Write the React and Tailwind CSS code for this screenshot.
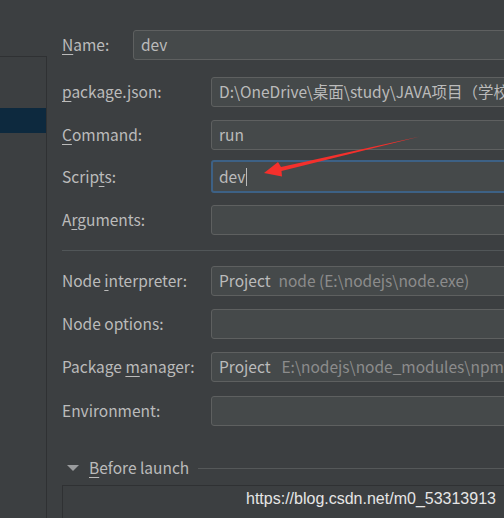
import React from "react";

const font = { fontFamily: '"Noto Sans CJK SC", "Noto Sans", sans-serif' };

function Field({ children, focused, className = "" }) {
  return (
    <div
      className={`h-[30px] w-[420px] shrink-0 rounded-[3px] bg-[#45494a] flex items-center text-[15.5px] text-[#bbbbbb] ${
        focused ? "border-2 border-[#3d6185] pl-[6px]" : "border border-[#5e6060] pl-[7px]"
      } ${className}`}
    >
      {children}
    </div>
  );
}

function Row({ label, children, mt, labelW = "w-[149px]" }) {
  return (
    <div className={`flex items-center ${mt}`}>
      <div className={`${labelW} shrink-0 text-[15.5px] text-[#bbbbbb]`}>{label}</div>
      {children}
    </div>
  );
}

const U = ({ children }) => <span className="underline underline-offset-[3px] decoration-1">{children}</span>;

export default function App() {
  return (
    <div className="relative w-[504px] h-[518px] overflow-hidden bg-[#3c3f41] flex" style={font}>
      <div className="w-[47px] shrink-0 mt-[56px] border-t border-r border-[#2f3133]">
        <div className="mt-[51px] h-[25px] bg-[#0d293e]" />
      </div>

      <div className="flex-1 pl-[15px] pt-[30px] min-w-0">
        <Row label={<><U>N</U>ame:</>} labelW="w-[71px]">
          <Field>dev</Field>
        </Row>
        <Row label={<><U>p</U>ackage.json:</>} mt="mt-[17px]">
          <Field>D:\OneDrive\桌面\study\JAVA项目（学校</Field>
        </Row>
        <Row label={<><U>C</U>ommand:</>} mt="mt-[13px]">
          <Field>run</Field>
        </Row>
        <Row label={<>Scrip<U>t</U>s:</>} mt="mt-[10px]">
          <Field focused className="h-[33px]">
            dev<span className="ml-[1px] inline-block w-px h-[18px] bg-[#bbbbbb]" />
          </Field>
        </Row>
        <Row label={<>A<U>r</U>guments:</>} mt="mt-[12px]">
          <Field />
        </Row>

        <div className="mt-[15px] h-px bg-[#515658]" />

        <Row label={<>Node <U>i</U>nterpreter:</>} mt="mt-[15px]">
          <Field>
            Project<span className="ml-[8px] text-[#8c8c8c]">node (E:\nodejs\node.exe)</span>
          </Field>
        </Row>
        <Row label="Node options:" mt="mt-[13px]">
          <Field />
        </Row>
        <Row label={<>Package <U>m</U>anager:</>} mt="mt-[13px]">
          <Field>
            Project<span className="ml-[11px] text-[#8c8c8c]">E:\nodejs\node_modules\npm</span>
          </Field>
        </Row>
        <Row label="Environment:" mt="mt-[14px]">
          <Field />
        </Row>

        <div className="mt-[30px] flex items-center h-[24px]">
          <svg width="12" height="8" viewBox="0 0 12 8" className="ml-[5px] mr-[10px]">
            <path d="M0 1 L12 1 L6 7 Z" fill="#9a9c9e" />
          </svg>
          <span className="text-[15.5px] text-[#bbbbbb]"><U>B</U>efore launch</span>
          <div className="flex-1 ml-[9px] h-px bg-[#555859]" />
        </div>
        <div className="mt-[5px] h-[60px] w-[460px] border border-[#2f3133]" />
      </div>

      <div
        className="absolute left-[246px] top-[487px] text-[16px] text-[#e6e6e6]"
        style={{ fontFamily: '"Liberation Sans", Arial, sans-serif' }}
      >
        https://blog.csdn.net/m0_53313913
      </div>

      <svg className="absolute left-0 top-0" width="504" height="518" viewBox="0 0 504 518">
        <path d="M420 136.5 L281 167 L278 162 L264 173 L282 176.5 L281.5 171 Z" fill="#f4302c" />
      </svg>
    </div>
  );
}
